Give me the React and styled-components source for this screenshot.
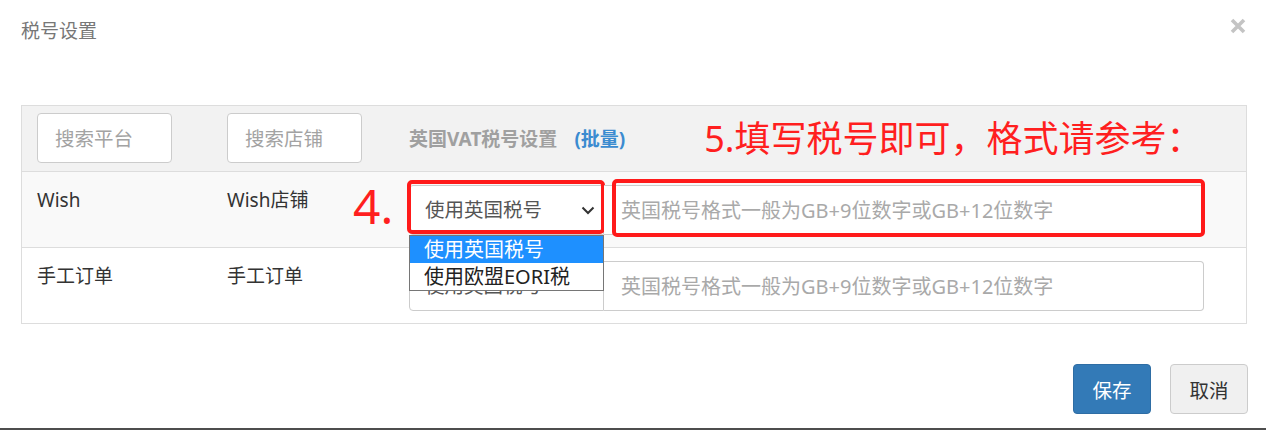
import React from "react";
import styled, { createGlobalStyle } from "styled-components";

const GlobalStyle = createGlobalStyle`
  html, body {
    margin: 0;
    padding: 0;
    background: #ffffff;
  }
  body {
    font-family: "Noto Sans", "Noto Sans CJK SC", sans-serif;
    color: #333333;
  }
  * {
    box-sizing: border-box;
  }
`;

const Modal = styled.div`
  width: 1266px;
  height: 430px;
  display: flex;
  flex-direction: column;
  border-bottom: 2px solid #4e4e4e;
  background: #ffffff;
`;

const Header = styled.div`
  height: 105px;
  padding: 19px 20px 0 21px;
  display: flex;
  justify-content: space-between;
  align-items: flex-start;
`;

const Title = styled.h4`
  margin: 0;
  font-size: 19px;
  line-height: 24px;
  font-weight: 400;
  color: #777777;
`;

const Close = styled.button`
  margin-top: -1px;
  padding: 0;
  width: 16px;
  height: 16px;
  border: none;
  background: none;
  color: #c4c4c4;
  cursor: pointer;
  display: flex;
`;

const Body = styled.div`
  padding: 0 19px 0 21px;
`;

const Table = styled.div`
  border: 1px solid #dddddd;
`;

const Row = styled.div`
  display: grid;
  grid-template-columns: 190px 182px 1fr;
  height: ${(props) => props.height}px;
  background: ${(props) => props.bg};
  border-top: ${(props) => (props.first ? "none" : "1px solid #dddddd")};
`;

const Cell = styled.div`
  padding: ${(props) => (props.head ? "7px 15px" : "13px 15px")};
  font-size: 19px;
  line-height: 30px;
  color: #333333;
  display: ${(props) => (props.flex ? "flex" : "block")};
  align-items: ${(props) => (props.head ? "center" : "flex-start")};
  position: relative;
`;

const SearchInput = styled.input`
  width: 135px;
  height: 50px;
  border: 1px solid #cccccc;
  border-radius: 4px;
  padding: 0 17px;
  font-family: inherit;
  font-size: 19.5px;
  color: #555555;
  background: #ffffff;
  outline: none;
  &::placeholder {
    color: #a3a3a3;
  }
`;

const HeadLabel = styled.span`
  font-weight: 700;
  font-size: 19px;
  color: #a0a0a0;
`;

const Batch = styled.a`
  margin-left: 17px;
  font-weight: 700;
  font-size: 19px;
  color: #3b8bd0;
  text-decoration: none;
`;

const Note = styled.span`
  margin-left: 79px;
  font-size: 36px;
  line-height: 36px;
  color: #ff1f1f;
  white-space: nowrap;
`;

const Field = styled.div`
  position: relative;
  display: flex;
`;

const SelectBox = styled.div`
  width: 195px;
  height: 50px;
  border: 1px solid #cccccc;
  border-radius: 4px 0 0 4px;
  background: #ffffff;
  padding: 0 8px 0 15px;
  display: flex;
  align-items: center;
  justify-content: space-between;
  font-size: 19.5px;
  color: #555555;
`;

const TaxInput = styled.input`
  width: 600px;
  height: 50px;
  border: 1px solid #cccccc;
  border-left: none;
  border-radius: 0 4px 4px 0;
  padding: 0 17px;
  font-family: inherit;
  font-size: 20px;
  color: #555555;
  background: #ffffff;
  outline: none;
  &::placeholder {
    color: #a9a9a9;
  }
`;

const Mark = styled.div`
  position: absolute;
  top: ${(props) => props.top}px;
  left: ${(props) => props.left}px;
  right: ${(props) => props.right}px;
  bottom: ${(props) => props.bottom}px;
  border: 4px solid #ff1a1a;
  border-radius: 5px;
  pointer-events: none;
`;

const StepNum = styled.span`
  position: absolute;
  top: -3px;
  left: -56px;
  font-size: 48px;
  line-height: 48px;
  color: #ff1f1f;
`;

const Menu = styled.ul`
  position: absolute;
  top: 100%;
  left: 0;
  width: 195px;
  margin: 0;
  padding: 0;
  list-style: none;
  border: 1px solid #767676;
  background: #ffffff;
  z-index: 2;
`;

const Option = styled.li`
  height: 27px;
  line-height: 27px;
  padding-left: 14px;
  font-size: 20px;
  color: ${(props) => (props.active ? "#ffffff" : "#222222")};
  background: ${(props) => (props.active ? "#1e90ff" : "#ffffff")};
`;

const Footer = styled.div`
  margin-top: 40px;
  padding-right: 18px;
  display: flex;
  justify-content: flex-end;
  gap: 19px;
`;

const Button = styled.button`
  width: 78px;
  height: 50px;
  border-radius: 4px;
  border: 1px solid ${(props) => (props.primary ? "#2e6da4" : "#cccccc")};
  background: ${(props) => (props.primary ? "#337ab7" : "#f0f0f0")};
  color: ${(props) => (props.primary ? "#ffffff" : "#333333")};
  font-family: inherit;
  font-size: 19.5px;
  padding: 0;
  cursor: pointer;
`;

const Chevron = () => (
  <svg width="14" height="9" viewBox="0 0 14 9">
    <path d="M1.5 1.5 L7 7 L12.5 1.5" fill="none" stroke="#333" strokeWidth="2" />
  </svg>
);

const CloseIcon = () => (
  <svg width="16" height="16" viewBox="0 0 16 16">
    <path d="M2 2 L14 14 M14 2 L2 14" stroke="currentColor" strokeWidth="3.6" />
  </svg>
);

const PLACEHOLDER = "英国税号格式一般为GB+9位数字或GB+12位数字";

const rows = [
  { platform: "Wish", shop: "Wish店铺", bg: "#f9f9f9", open: true },
  { platform: "手工订单", shop: "手工订单", bg: "#ffffff", open: false },
];

export default function App() {
  return (
    <>
      <GlobalStyle />
      <Modal>
        <Header>
          <Title>税号设置</Title>
          <Close aria-label="close">
            <CloseIcon />
          </Close>
        </Header>
        <Body>
          <Table>
            <Row first height={65} bg="#f2f2f2">
              <Cell head>
                <SearchInput placeholder="搜索平台" />
              </Cell>
              <Cell head>
                <SearchInput placeholder="搜索店铺" />
              </Cell>
              <Cell head flex>
                <HeadLabel>英国VAT税号设置</HeadLabel>
                <Batch href="#">(批量)</Batch>
                <Note>5.填写税号即可，格式请参考：</Note>
              </Cell>
            </Row>
            {rows.map((r) => (
              <Row key={r.platform} height={76} bg={r.bg}>
                <Cell>{r.platform}</Cell>
                <Cell>{r.shop}</Cell>
                <Cell flex>
                  <Field>
                    <SelectBox>
                      <span>使用英国税号</span>
                      <Chevron />
                    </SelectBox>
                    {r.open && (
                      <>
                        <StepNum>4.</StepNum>
                        <Mark top={-5} left={-2} right={-1} bottom={1} />
                        <Menu>
                          <Option active>使用英国税号</Option>
                          <Option>使用欧盟EORI税</Option>
                        </Menu>
                      </>
                    )}
                  </Field>
                  <Field>
                    <TaxInput placeholder={PLACEHOLDER} />
                    {r.open && <Mark top={-6} left={8} right={-1} bottom={-2} />}
                  </Field>
                </Cell>
              </Row>
            ))}
          </Table>
        </Body>
        <Footer>
          <Button primary>保存</Button>
          <Button>取消</Button>
        </Footer>
      </Modal>
    </>
  );
}
